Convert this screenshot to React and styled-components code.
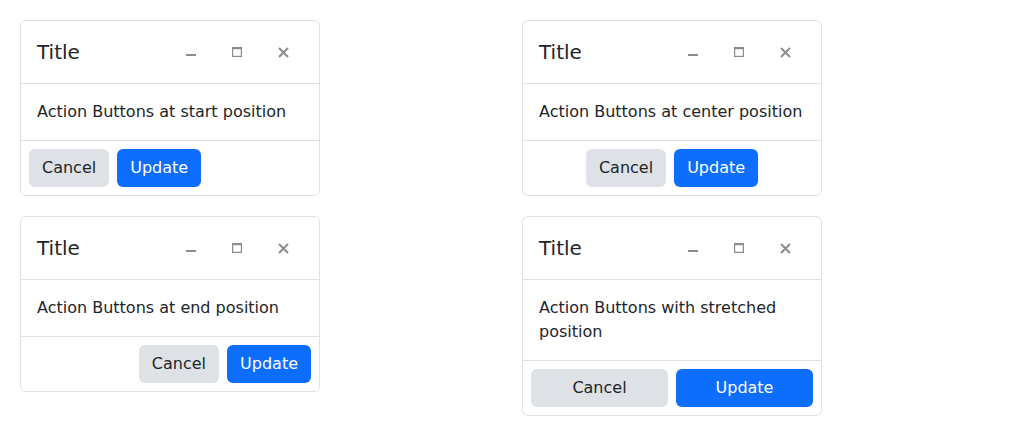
import React from "react";
import styled, { createGlobalStyle } from "styled-components";

const GlobalStyle = createGlobalStyle`
  body {
    margin: 0;
    background: #fff;
    font-family: "DejaVu Sans", sans-serif;
    color: #212529;
  }
`;

const MinimizeIcon = () => (
  <svg width="10" height="10" viewBox="0 0 10 10">
    <rect x="0" y="7" width="10" height="2" fill="currentColor" />
  </svg>
);

const MaximizeIcon = () => (
  <svg width="10" height="10" viewBox="0 0 10 10">
    <rect x="0.6" y="0.6" width="8.8" height="8.8" fill="none" stroke="currentColor" strokeWidth="1.2" />
    <rect x="0" y="0" width="10" height="2.2" fill="currentColor" />
  </svg>
);

const CloseIcon = () => (
  <svg width="11" height="11" viewBox="0 0 11 11">
    <path d="M1 1 L10 10 M10 1 L1 10" stroke="currentColor" strokeWidth="2" />
  </svg>
);

const dialogs = [
  { text: "Action Buttons at start position", align: "start" },
  { text: "Action Buttons at center position", align: "center" },
  { text: "Action Buttons at end position", align: "end" },
  { text: "Action Buttons with stretched position", align: "stretch" },
];

const Dialog = ({ text, align }) => (
  <Card>
    <Header>
      <Title>Title</Title>
      <Controls>
        <IconButton aria-label="minimize">
          <MinimizeIcon />
        </IconButton>
        <IconButton aria-label="maximize">
          <MaximizeIcon />
        </IconButton>
        <IconButton aria-label="close">
          <CloseIcon />
        </IconButton>
      </Controls>
    </Header>
    <Body>{text}</Body>
    <Footer $align={align}>
      <Button $variant="light" $stretch={align === "stretch"}>
        Cancel
      </Button>
      <Button $variant="primary" $stretch={align === "stretch"}>
        Update
      </Button>
    </Footer>
  </Card>
);

const App = () => (
  <>
    <GlobalStyle />
    <Page>
      {dialogs.map((d) => (
        <Dialog key={d.align} text={d.text} align={d.align} />
      ))}
    </Page>
  </>
);

const Page = styled.div`
  display: grid;
  grid-template-columns: 502px 502px;
  row-gap: 20px;
  padding: 20px;
  align-items: start;
`;

const Card = styled.div`
  width: 300px;
  box-sizing: border-box;
  border: 1px solid #dee2e6;
  border-radius: 6px;
  background: #fff;
`;

const Header = styled.div`
  display: flex;
  align-items: center;
  justify-content: space-between;
  padding: 16px;
  border-bottom: 1px solid #dee2e6;
`;

const Title = styled.h5`
  margin: 0;
  font-size: 20px;
  font-weight: 400;
  line-height: 1.2;
`;

const Controls = styled.div`
  display: flex;
  gap: 6px;
`;

const IconButton = styled.button`
  width: 40px;
  height: 30px;
  display: flex;
  align-items: center;
  justify-content: center;
  padding: 0;
  border: none;
  background: transparent;
  color: #8a8d90;
  cursor: pointer;
`;

const Body = styled.div`
  padding: 16px;
  font-size: 16px;
  line-height: 24px;
  border-bottom: 1px solid #dee2e6;
`;

const Footer = styled.div`
  display: flex;
  gap: 8px;
  padding: 8px;
  justify-content: ${(p) =>
    p.$align === "center" ? "center" : p.$align === "end" ? "flex-end" : "flex-start"};
`;

const Button = styled.button`
  flex: ${(p) => (p.$stretch ? "1 1 0" : "0 0 auto")};
  font-family: "DejaVu Sans", sans-serif;
  font-size: 16px;
  line-height: 24px;
  padding: 6px 12px;
  border: 1px solid transparent;
  border-radius: 6px;
  cursor: pointer;
  background: ${(p) => (p.$variant === "primary" ? "#0d6efd" : "#dee2e6")};
  color: ${(p) => (p.$variant === "primary" ? "#fff" : "#212529")};
`;

export default App;
